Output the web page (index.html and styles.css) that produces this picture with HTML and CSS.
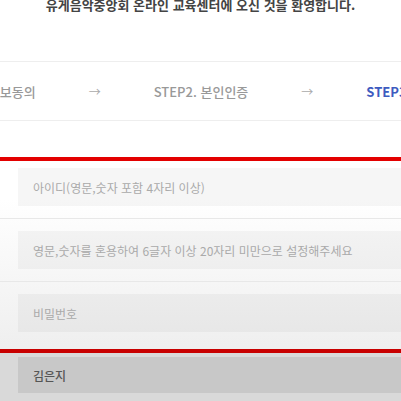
FILE: index.html
```html
<!DOCTYPE html>
<html lang="ko">
<head>
  <meta charset="UTF-8" />
  <meta name="viewport" content="width=device-width, initial-scale=1.0" />
  <title>회원가입 — 온라인 교육센터</title>
  <link rel="stylesheet" href="styles.css">
</head>
<body>

  <p class="welcome">유게음악중앙회 온라인 교육센터에 오신 것을 환영합니다.</p>

  <div class="steps">
    <span class="step">STEP1. 약관 및 정보동의</span>
    <span class="arrow">→</span>
    <span class="step">STEP2. 본인인증</span>
    <span class="arrow">→</span>
    <span class="step active">STEP3. 정보입력</span>
  </div>

  <form id="join-form">
    <div class="highlight">
      <div class="form-row first">
        <input type="text" id="user-id" placeholder="아이디(영문,숫자 포함 4자리 이상)" />
      </div>
      <div class="form-row">
        <input type="password" id="user-pw" placeholder="영문,숫자를 혼용하여 6글자 이상 20자리 미만으로 설정해주세요" />
      </div>
      <div class="form-row last">
        <input type="password" id="user-pw2" placeholder="비밀번호" />
      </div>
    </div>

    <div class="form-row locked">
      <input type="text" id="user-name" value="김은지" readonly />
    </div>
  </form>

</body>
</html>
```

FILE: styles.css
```css
body {
  margin: 0;
  overflow: hidden;
  font-family: "Noto Sans CJK KR", "Noto Sans", sans-serif;
  background: linear-gradient(#fff 0, #fff 200px, #efefef 345px);
  color: #333;
}

.welcome {
  margin: -1px 0 0;
  text-align: center;
  font-size: 13px;
  line-height: 12px;
  font-weight: bold;
  color: #444;
}

.steps {
  display: flex;
  align-items: center;
  gap: 53px;
  height: 58px;
  margin: 50px 0 0 -102px;
  border-top: 1px solid #eee;
  border-bottom: 1px solid #eee;
  white-space: nowrap;
}

.step {
  font-size: 13px;
  font-weight: 500;
  color: #999;
}

.step.active {
  color: #3d5bc0;
  font-weight: bold;
}

.arrow {
  font-size: 12px;
  color: #aaa;
}

#join-form {
  margin-top: 36px;
}

.highlight {
  border-top: 4px solid #e30000;
  border-bottom: 4px solid #c80000;
}

.form-row {
  padding: 12px 0 12px 18px;
  margin-right: -60px;
  border-bottom: 1px solid #e8e8e8;
}

.form-row.first {
  padding-top: 7px;
}

.form-row.last {
  padding-bottom: 17px;
  border-bottom: none;
}

.form-row input {
  display: block;
  box-sizing: border-box;
  width: 100%;
  height: 38px;
  padding: 0 15px;
  border: none;
  outline: none;
  background: rgba(0, 0, 0, 0.035);
  font-family: inherit;
  font-size: 12px;
  color: #555;
}

.form-row input::placeholder {
  color: #aaa;
}

.form-row.locked {
  padding: 4px 0 8px 18px;
  background: #d9d9d9;
  border-bottom: none;
}

.form-row.locked input {
  height: 36px;
  background: #c8c8c8;
  font-weight: 500;
  color: #555;
}
```
